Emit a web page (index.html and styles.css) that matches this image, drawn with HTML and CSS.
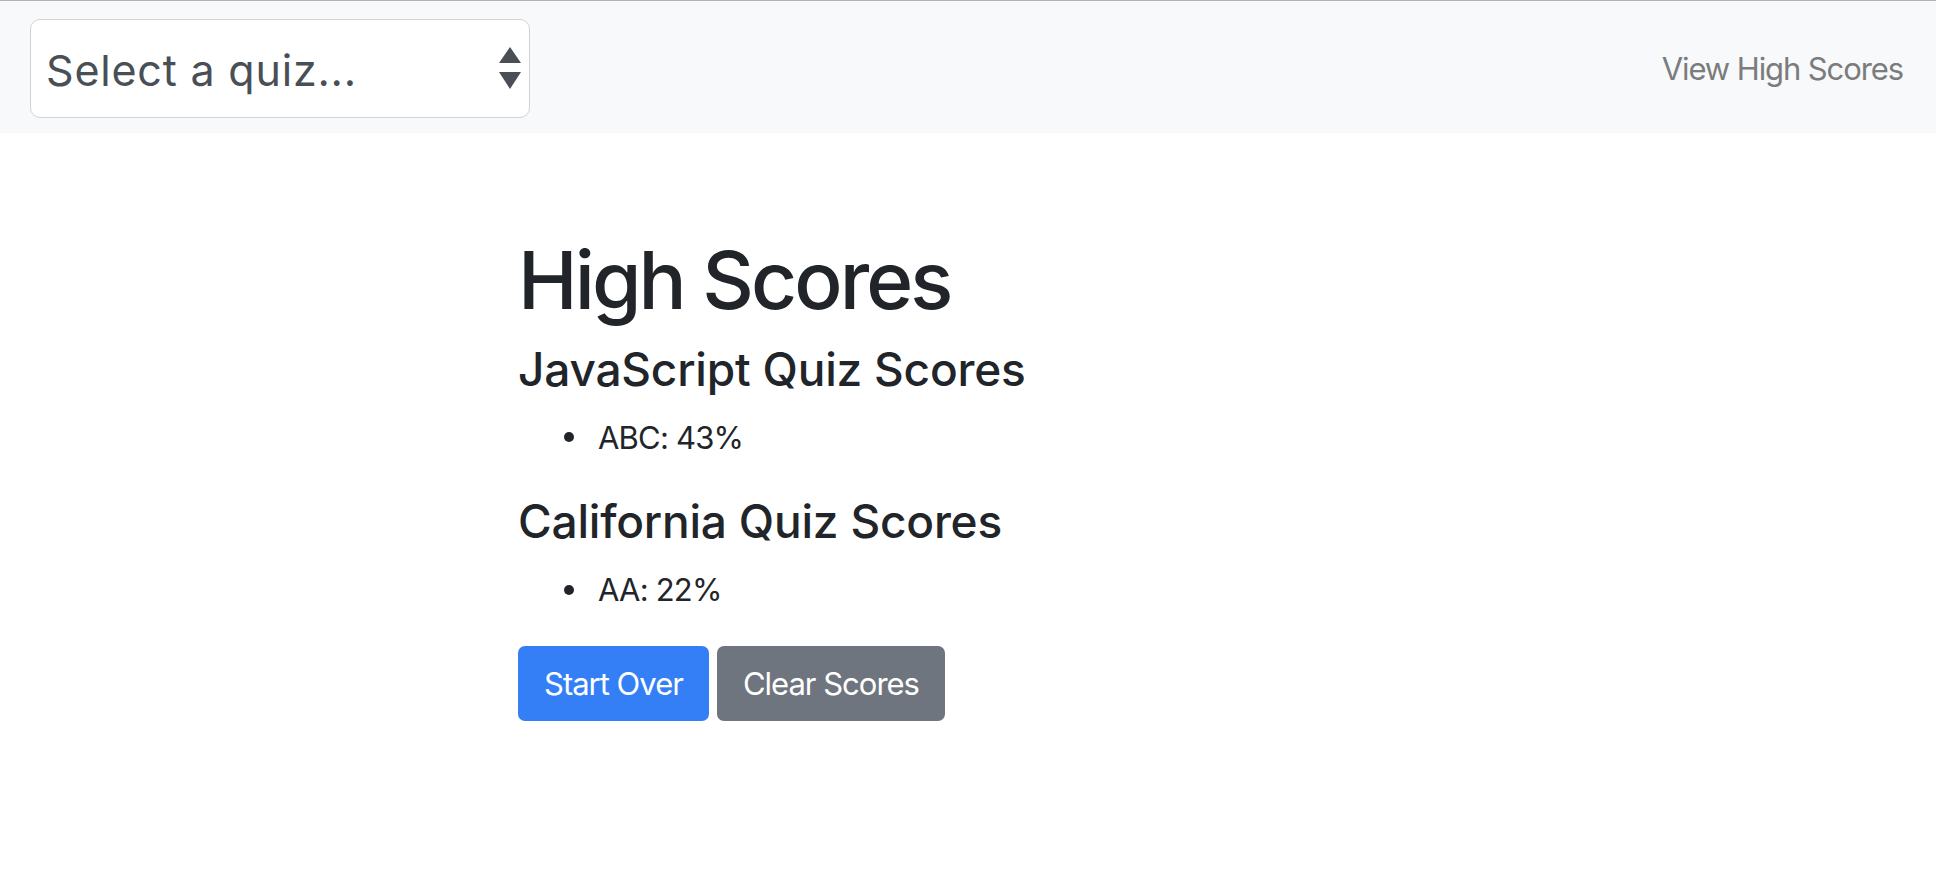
FILE: index.html
```html
<!DOCTYPE html>
<html lang="en">
<head>
<meta charset="utf-8">
<title>Quiz - High Scores</title>
<link rel="stylesheet" href="styles.css">
</head>
<body>
<nav class="navbar">
  <div class="quiz-select">
    <span class="quiz-select-label">Select a quiz...</span>
    <svg class="quiz-select-arrows" width="22" height="42" viewBox="0 0 22 42">
      <polygon points="11,0 22,16 0,16" fill="#4a4f56"/>
      <polygon points="0,25 22,25 11,42" fill="#4a4f56"/>
    </svg>
  </div>
  <a class="nav-link" href="#">View High Scores</a>
</nav>
<main class="content">
  <h1 class="title">High Scores</h1>
  <h4 class="quiz-title">JavaScript Quiz Scores</h4>
  <ul class="score-list">
    <li>ABC: 43%</li>
  </ul>
  <h4 class="quiz-title">California Quiz Scores</h4>
  <ul class="score-list">
    <li>AA: 22%</li>
  </ul>
  <div class="actions">
    <button class="btn btn-primary">Start Over</button>
    <button class="btn btn-secondary">Clear Scores</button>
  </div>
</main>
</body>
</html>
```

FILE: styles.css
```css
* { box-sizing: border-box; }

html, body {
  margin: 0;
  padding: 0;
  background: #ffffff;
}

body {
  font-family: Inter, "Liberation Sans", sans-serif;
  color: #212529;
  border-top: 1px solid #b4b4b4;
}

.navbar {
  height: 132px;
  background: #f8f9fa;
  display: flex;
  align-items: center;
  justify-content: space-between;
  padding: 0 33px 0 30px;
}

.quiz-select {
  width: 500px;
  height: 99px;
  margin-top: 2px;
  background: #ffffff;
  border: 1px solid #ced3d9;
  border-radius: 10px;
  display: flex;
  align-items: center;
  justify-content: space-between;
  padding: 3px 8px 0 15px;
}

.quiz-select-label {
  font-size: 43px;
  color: #494f56;
  letter-spacing: 0.8px;
}

.quiz-select-arrows {
  display: block;
  margin-top: -3px;
}

.nav-link {
  font-size: 31px;
  color: #7b7c7d;
  text-decoration: none;
  letter-spacing: -1.1px;
  margin-top: 3px;
}

.content {
  padding-left: 518px;
  padding-top: 99px;
}

.title {
  font-size: 80px;
  font-weight: 500;
  line-height: 1.2;
  margin: 0 0 14px;
  letter-spacing: -2.9px;
}

.quiz-title {
  font-size: 46px;
  font-weight: 500;
  line-height: 1.2;
  margin: 0 0 17px;
  letter-spacing: -0.2px;
}

.score-list {
  list-style: none;
  margin: 0 0 32px;
  padding-left: 80px;
  font-size: 31px;
  line-height: 48px;
  letter-spacing: -0.8px;
}

.score-list li::before {
  content: "";
  display: inline-block;
  width: 10px;
  height: 10px;
  border-radius: 50%;
  background: #212529;
  margin-left: -34px;
  margin-right: 24px;
  vertical-align: 0.22em;
}

.actions {
  display: flex;
  gap: 8px;
}

.btn {
  font-family: inherit;
  font-size: 31px;
  line-height: 48px;
  height: 75px;
  padding: 0 24px;
  border: 2px solid transparent;
  border-radius: 7px;
  color: #ffffff;
  letter-spacing: -1px;
  cursor: pointer;
}

.btn-primary {
  background: #347ff6;
  border-color: #347ff6;
}

.btn-secondary {
  background: #6f757e;
  border-color: #6f757e;
}
```
